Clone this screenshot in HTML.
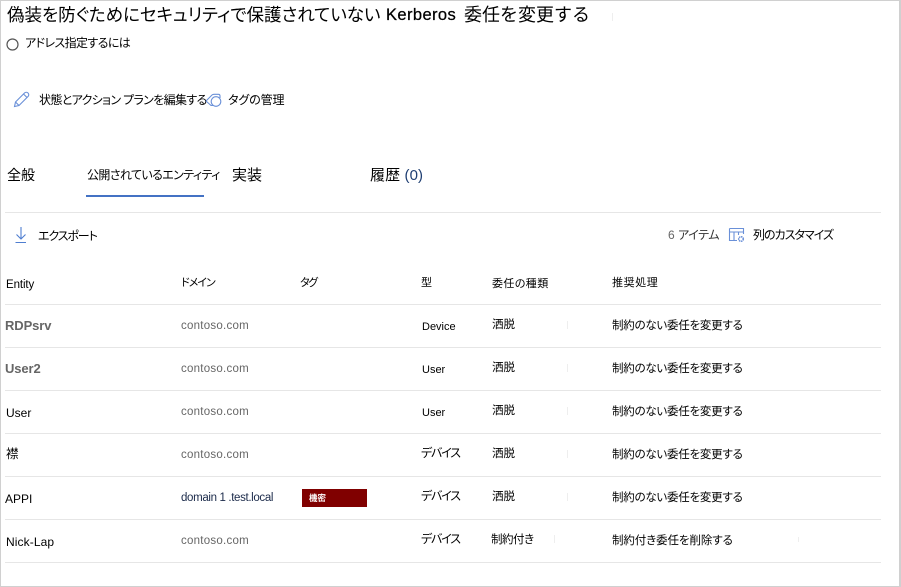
<!DOCTYPE html>
<html lang="ja">
<head>
<meta charset="utf-8">
<title>Kerberos 委任</title>
<style>
html,body{margin:0;padding:0;background:#fff}
body{width:901px;height:587px;position:relative;overflow:hidden;font-family:"Liberation Sans","Noto Sans CJK JP",sans-serif;color:#000;font-feature-settings:"palt"}
.t{position:absolute;white-space:nowrap;line-height:16px;font-size:12px}
.l{position:absolute;background:#e6e6e6;height:1px;left:5px;width:876px}
.g{color:#666}
.d{font-size:11.5px;letter-spacing:.25px}
.b{font-weight:bold;font-size:13px;letter-spacing:-.1px}
.n{font-size:12px}
.h{font-size:11px}
.r{font-size:11.5px;letter-spacing:-.25px}
.x{letter-spacing:-1.2px}
.v{position:absolute;width:1px;height:8px;background:#eee}
svg{position:absolute;overflow:visible}
</style>
</head>
<body>
<div style="position:absolute;left:0;top:0;width:898px;height:585px;border:1px solid #d0d0d0;border-right-width:2px"></div>

<div class="t" style="left:7px;top:5px;line-height:20px;font-size:17.5px">偽装を防ぐためにセキュリティで保護されていない</div>
<div class="t" style="left:386px;top:5px;line-height:20px;font-size:16.5px;letter-spacing:.4px;-webkit-text-stroke:.25px #000">Kerberos</div>
<div class="t" style="left:464px;top:5px;line-height:20px;font-size:18px;font-feature-settings:normal">委任を変更する</div>
<div class="v" style="left:612px;top:13px"></div>

<svg style="left:6px;top:38px" width="14" height="14"><circle cx="6.5" cy="6.5" r="5.5" fill="none" stroke="#555" stroke-width="1.2"/></svg>
<div class="t" style="left:25px;top:35px;letter-spacing:-.6px">アドレス指定するには</div>

<svg style="left:13px;top:91px" width="17" height="17" viewBox="0 0 17 17"><path d="M1.5 15.5L2.5 11L11.5 2C12.5 1 14 1 15 2C16 3 16 4.5 15 5.5L6 14.5ZM2.5 11L6 14.5M10.5 3L14 6.5" fill="none" stroke="#6a90d8" stroke-width="1.1"/></svg>
<div class="t" style="left:39px;top:92px;letter-spacing:-.65px">状態とアクション プランを編集する</div>
<svg style="left:205px;top:93px" width="17" height="15" viewBox="0 0 17 15"><path d="M1 8L7 2C7.5 1.5 8 1.3 9 1.3H13.5C14.5 1.3 15 2 15 3V5M1 8L6 12.5H8" fill="none" stroke="#6a90d8" stroke-width="1.1"/><circle cx="11" cy="8.5" r="4.8" fill="none" stroke="#6a90d8" stroke-width="1.1"/></svg>
<div class="t" style="left:228px;top:92px;letter-spacing:-.1px">タグの管理</div>

<div class="t" style="left:7px;top:167px;font-size:14px">全般</div>
<div class="t" style="left:87px;top:167px;font-size:12px;letter-spacing:-.6px">公開されているエンティティ</div>
<div class="t" style="left:232px;top:168px;font-size:15px">実装</div>
<div class="t" style="left:370px;top:168px;font-size:15px;letter-spacing:.1px">履歴 <span style="color:#1f3f73">(0)</span></div>
<div style="position:absolute;left:86px;top:195px;width:118px;height:2px;background:#4472c4"></div>
<div class="l" style="top:212px"></div>

<svg style="left:15px;top:226px" width="12" height="18" viewBox="0 0 12 18"><path d="M6 1V13M1.5 8.5L6 13L10.5 8.5M0.5 16.5H11" fill="none" stroke="#4f7ed0" stroke-width="1.1"/></svg>
<div class="t" style="left:38px;top:228px;letter-spacing:-1.1px">エクスポート</div>

<div class="t g" style="left:668px;top:227px">6 <span style="color:#333;letter-spacing:-.4px">アイテム</span></div>
<svg style="left:728px;top:227px" width="18" height="16" viewBox="0 0 18 16"><path d="M1.5 1.5H15.5V7M1.5 1.5V13.5H9M1.5 5H15.5M6 5V13.5M10.5 5V8" fill="none" stroke="#6a90d8" stroke-width="1.1"/><circle cx="13" cy="12" r="2.3" fill="none" stroke="#6a90d8" stroke-width="1.5" stroke-dasharray="1.5 .6"/></svg>
<div class="t" style="left:753px;top:227px;letter-spacing:-1px">列のカスタマイズ</div>

<div class="t h" style="left:6px;top:277px;font-size:11.5px;letter-spacing:-.1px">Entity</div>
<div class="t h" style="left:181px;top:275px;letter-spacing:-1px">ドメイン</div>
<div class="t h" style="left:300px;top:275px;letter-spacing:-1.5px">タグ</div>
<div class="t h" style="left:421px;top:275px">型</div>
<div class="t h" style="left:492px;top:276px;letter-spacing:.4px">委任の種類</div>
<div class="t h" style="left:612px;top:275px;letter-spacing:.6px">推奨処理</div>
<div class="l" style="top:304px"></div>

<div class="t b g" style="left:5px;top:318px">RDPsrv</div>
<div class="t d g" style="left:181px;top:318px">contoso.com</div>
<div class="t" style="left:422px;top:319px;font-size:11px">Device</div>
<div class="t" style="left:492px;top:317px;font-size:11.5px">洒脱</div>
<div class="v" style="left:567px;top:321px"></div>
<div class="t r" style="left:612px;top:318px">制約のない委任を変更する</div>
<div class="l" style="top:347px"></div>

<div class="t b g" style="left:5px;top:361px">User2</div>
<div class="t d g" style="left:181px;top:361px">contoso.com</div>
<div class="t" style="left:422px;top:362px;font-size:11px">User</div>
<div class="t" style="left:492px;top:360px;font-size:11.5px">洒脱</div>
<div class="v" style="left:567px;top:364px"></div>
<div class="t r" style="left:612px;top:361px">制約のない委任を変更する</div>
<div class="l" style="top:390px"></div>

<div class="t n" style="left:6px;top:405px">User</div>
<div class="t d g" style="left:181px;top:404px">contoso.com</div>
<div class="t" style="left:422px;top:405px;font-size:11px">User</div>
<div class="t" style="left:492px;top:403px;font-size:11.5px">洒脱</div>
<div class="v" style="left:567px;top:407px"></div>
<div class="t r" style="left:612px;top:404px">制約のない委任を変更する</div>
<div class="l" style="top:433px"></div>

<div class="t" style="left:6px;top:446px;font-size:12.5px">襟</div>
<div class="t d g" style="left:181px;top:447px">contoso.com</div>
<div class="t x" style="left:421px;top:445px">デバイス</div>
<div class="t" style="left:492px;top:446px;font-size:11.5px">洒脱</div>
<div class="v" style="left:567px;top:450px"></div>
<div class="t r" style="left:612px;top:447px">制約のない委任を変更する</div>
<div class="l" style="top:476px"></div>

<div class="t n" style="left:5px;top:491px">APPI</div>
<div class="t" style="left:181px;top:490px;color:#1b2a4a;font-size:11.5px;letter-spacing:-.35px">domain 1 .test.local</div>
<div style="position:absolute;left:302px;top:489px;width:65px;height:18px;background:#800000"></div>
<div class="t" style="left:309px;top:490px;color:#fff;font-size:8.5px;font-weight:bold">機密</div>
<div class="t x" style="left:421px;top:488px">デバイス</div>
<div class="t" style="left:492px;top:489px;font-size:11.5px">洒脱</div>
<div class="v" style="left:567px;top:493px"></div>
<div class="t r" style="left:612px;top:490px">制約のない委任を変更する</div>
<div class="l" style="top:519px"></div>

<div class="t n" style="left:6px;top:534px;letter-spacing:.1px">Nick-Lap</div>
<div class="t d g" style="left:181px;top:533px">contoso.com</div>
<div class="t x" style="left:421px;top:531px">デバイス</div>
<div class="t" style="left:491px;top:532px;font-size:11.5px;letter-spacing:-.5px">制約付き</div>
<div class="v" style="left:554px;top:535px"></div>
<div class="t r" style="left:612px;top:533px;letter-spacing:-.1px">制約付き委任を削除する</div>
<div class="v" style="left:798px;top:537px;height:5px"></div>
<div class="l" style="top:562px"></div>
</body>
</html>
